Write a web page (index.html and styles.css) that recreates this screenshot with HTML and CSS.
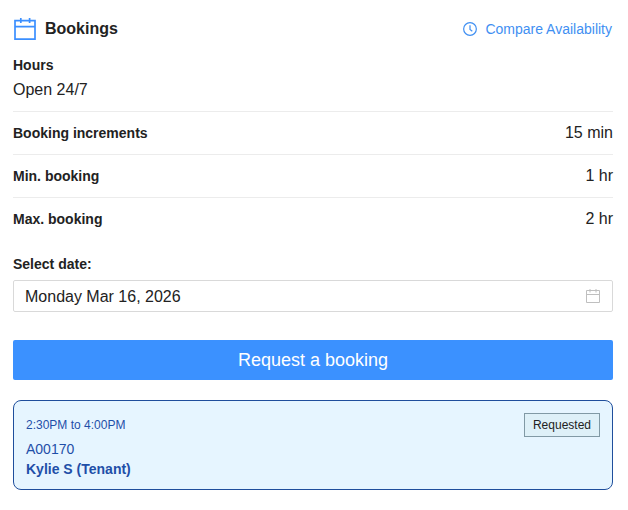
FILE: index.html
```html
<!DOCTYPE html>
<html lang="en">
<head>
    <meta charset="UTF-8">
    <meta name="viewport" content="width=device-width, initial-scale=1.0">
    <title>Bookings</title>
    <link rel="stylesheet" href="styles.css">
</head>
<body>
    <div class="bookings">
        <div class="header">
            <svg class="header-icon" width="24" height="24" viewBox="0 0 24 24">
                <path d="M2 3.6h20v18.6H2zM2 9.6h20M7.8 1v5M16.6 1v5"/>
            </svg>
            <h1 class="title">Bookings</h1>
            <a class="compare-link" href="#">
                <svg class="clock-icon" width="14" height="14" viewBox="0 0 14 14">
                    <circle cx="7" cy="7" r="6.35"/>
                    <path d="M7 3.3v4.2l2.3 1.8"/>
                </svg>
                Compare Availability
            </a>
        </div>

        <div class="hours">
            <div class="label">Hours</div>
            <div class="hours-value">Open 24/7</div>
        </div>

        <div class="info-row">
            <span class="label">Booking increments</span>
            <span class="value">15 min</span>
        </div>
        <div class="info-row">
            <span class="label">Min. booking</span>
            <span class="value">1 hr</span>
        </div>
        <div class="info-row">
            <span class="label">Max. booking</span>
            <span class="value">2 hr</span>
        </div>

        <div class="date-label">Select date:</div>
        <div class="date-picker">
            <span class="date-value">Monday Mar 16, 2026</span>
            <svg class="date-icon" width="16" height="16" viewBox="0 0 16 16">
                <path d="M1.5 2.5h13v12h-13zM1.5 6.5h13M5 1v3.5M11 1v3.5"/>
            </svg>
        </div>

        <button type="button" class="request-btn">Request a booking</button>

        <div class="booking-card">
            <div class="booking-info">
                <div class="booking-time">2:30PM to 4:00PM</div>
                <div class="booking-code">A00170</div>
                <div class="booking-user">Kylie S (Tenant)</div>
            </div>
            <span class="status">Requested</span>
        </div>
    </div>
</body>
</html>
```
FILE: styles.css
```css
body {
    font-family: "Liberation Sans", Arial, sans-serif;
    background-color: #fff;
    color: #222;
    margin: 0;
}

.bookings {
    width: 600px;
    padding: 16px 15px 0 13px;
}

.header {
    display: flex;
    align-items: center;
    height: 26px;
}

.header-icon {
    margin-right: 8px;
    fill: none;
    stroke: #3b8fff;
    stroke-width: 1.7;
}

.title {
    margin: 0;
    font-size: 16px;
    font-weight: bold;
    line-height: 26px;
}

.compare-link {
    display: flex;
    align-items: center;
    gap: 8px;
    margin-left: auto;
    margin-right: 1px;
    font-size: 14px;
    color: #3f8ff2;
    text-decoration: none;
}

.clock-icon {
    fill: none;
    stroke: #3f8ff2;
    stroke-width: 1.2;
}

.label {
    font-size: 14px;
    font-weight: bold;
    line-height: 22px;
}

.hours {
    padding: 12px 0 9px;
}

.hours-value {
    margin-top: 1px;
    font-size: 16px;
    line-height: 25px;
}

.info-row {
    display: flex;
    align-items: center;
    justify-content: space-between;
    height: 42px;
    border-top: 1px solid #ececec;
}

.value {
    font-size: 16px;
}

.date-label {
    margin: 13px 0 5px;
    font-size: 14px;
    font-weight: bold;
    line-height: 22px;
}

.date-picker {
    display: flex;
    align-items: center;
    justify-content: space-between;
    box-sizing: border-box;
    height: 32px;
    padding: 0 11px;
    border: 1px solid #d9d9d9;
    border-radius: 2px;
    font-size: 16px;
}

.date-value {
    padding-top: 2px;
}

.date-icon {
    fill: none;
    stroke: #bfbfbf;
    stroke-width: 1;
}

.request-btn {
    display: block;
    width: 100%;
    height: 40px;
    margin: 28px 0 20px;
    padding: 0;
    border: none;
    border-radius: 2px;
    background-color: #3b91ff;
    color: #fff;
    font-family: inherit;
    font-size: 18px;
    cursor: pointer;
}

.booking-card {
    display: flex;
    justify-content: space-between;
    align-items: flex-start;
    box-sizing: border-box;
    height: 90px;
    padding: 12px;
    border: 1px solid #1f4e9c;
    border-radius: 8px;
    background-color: #e6f5ff;
    color: #1f4fa8;
}

.booking-info {
    padding-top: 1px;
}

.booking-time {
    margin-bottom: 3px;
    font-size: 12px;
    line-height: 22px;
}

.booking-code,
.booking-user {
    font-size: 14px;
    line-height: 20px;
}

.booking-user {
    font-weight: bold;
}

.status {
    padding: 0 8px;
    border: 1px solid #8199a5;
    background-color: #def0f8;
    color: #222;
    font-size: 12px;
    line-height: 22px;
}
```
